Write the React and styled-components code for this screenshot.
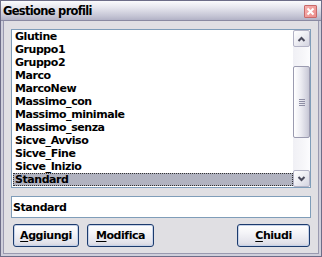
import React from "react";
import styled, { createGlobalStyle } from "styled-components";

const Global = createGlobalStyle`
  html, body { margin: 0; padding: 0; background: #e0dfe3; }
  * { box-sizing: border-box; }
`;

const FONT = `"DejaVu Sans", Verdana, sans-serif`;

const Window = styled.div`
  width: 322px;
  height: 257px;
  border: 1px solid #6d6d88;
  display: flex;
  flex-direction: column;
  background: #e0dfe3;
  box-shadow: inset 0 0 0 2px #cfcfdb, inset 0 0 0 3px #9a9ab0;
  font-family: ${FONT};
`;

const TitleBar = styled.div`
  height: 20px;
  flex: none;
  display: flex;
  align-items: center;
  justify-content: space-between;
  padding: 0 4px 0 2px;
  background: linear-gradient(to bottom, #fbfbfd 0%, #e6e6ee 35%, #c4c4d4 80%, #b2b2c6 100%);
  border-bottom: 1px solid #8a8aa2;
`;

const Title = styled.span`
  font-weight: bold;
  font-size: 11.5px;
  letter-spacing: -0.7px;
  color: #000;
  margin-top: 1px;
`;

const CloseBtn = styled.div`
  width: 13px;
  height: 13px;
  margin-top: 2px;
  border: 1px solid #c86a6a;
  border-radius: 1px;
  background: linear-gradient(135deg, #f6b0ae 0%, #ec8e8c 100%);
  display: flex;
  align-items: center;
  justify-content: center;
`;

const Body = styled.div`
  flex: 1;
  margin: 0 3px 3px;
  padding: 8px 7px 6px;
  display: flex;
  flex-direction: column;
`;

const ListBox = styled.div`
  height: 159px;
  flex: none;
  border: 1px solid #7f9db9;
  background: #fff;
  display: flex;
`;

const Items = styled.div`
  flex: 1;
  display: flex;
  flex-direction: column;
`;

const Item = styled.div`
  height: 13px;
  line-height: 14px;
  margin-left: 1px;
  padding-left: 2px;
  font-size: 11px;
  font-weight: bold;
  letter-spacing: -0.45px;
  color: #000;
  white-space: nowrap;
  outline: ${(p) => (p.$selected ? "1px dotted #333" : "none")};
  outline-offset: -1px;
  background: ${(p) => (p.$selected ? "#b1b3c0" : "transparent")};
`;

const ScrollBar = styled.div`
  width: 17px;
  flex: none;
  display: flex;
  flex-direction: column;
  background: linear-gradient(to right, #f0f0f5 0%, #f6f6f9 60%, #fcfcfe 100%);
`;

const ScrollBtn = styled.div`
  width: 17px;
  height: 17px;
  flex: none;
  border: 1px solid #b3b3c6;
  border-radius: 2px;
  background: linear-gradient(135deg, #ffffff 0%, #ececf2 50%, #d4d4e0 100%);
  display: flex;
  align-items: center;
  justify-content: center;
`;

const Track = styled.div`
  flex: 1;
  display: flex;
  flex-direction: column;
  padding-top: ${(p) => p.$before}px;
  padding-bottom: ${(p) => p.$after}px;
`;

const Thumb = styled.div`
  flex: 1;
  border: 1px solid #9b9bb0;
  border-radius: 2px;
  background: linear-gradient(to right, #ffffff 0%, #ececf2 45%, #d2d2de 85%, #c6c6d4 100%);
  display: flex;
  align-items: center;
  justify-content: center;
`;

const Grip = styled.div`
  width: 6px;
  display: flex;
  flex-direction: column;
  gap: 1px;
`;

const GripLine = styled.div`
  height: 1px;
  background: #8e8ea4;
`;

const TextBox = styled.div`
  margin-top: 8px;
  height: 22px;
  flex: none;
  border: 1px solid #7f9db9;
  background: #fff;
  padding-left: 1px;
  font-size: 11px;
  font-weight: bold;
  letter-spacing: -0.45px;
  display: flex;
  align-items: center;
`;

const ButtonRow = styled.div`
  margin-top: 6px;
  padding: 0 1px 0 2px;
  display: flex;
  gap: 8px;
`;

const Spacer = styled.div`
  flex: 1;
`;

const Button = styled.button`
  width: ${(p) => p.$w}px;
  height: 23px;
  border: 1px solid #1c3b6e;
  border-radius: 3px;
  background: linear-gradient(to bottom, #ffffff 0%, #f3f3f7 40%, #e2e2ea 85%, #d2d2de 100%);
  box-shadow: inset 0 0 0 1px #c6d2e8;
  font-family: ${FONT};
  font-size: 11px;
  font-weight: bold;
  letter-spacing: -0.45px;
  color: #000;
  padding: 0;
  display: flex;
  align-items: center;
  justify-content: center;
`;

const U = styled.span`
  text-decoration: underline;
  text-underline-offset: 2px;
`;

const names = [
  "Glutine",
  "Gruppo1",
  "Gruppo2",
  "Marco",
  "MarcoNew",
  "Massimo_con",
  "Massimo_minimale",
  "Massimo_senza",
  "Sicve_Avviso",
  "Sicve_Fine",
  "Sicve_Inizio",
  "Standard",
];

const Chevron = ({ up }) => (
  <svg width="9" height="6" viewBox="0 0 9 6">
    <path
      d={up ? "M1.5 5 L4.5 2 L7.5 5" : "M1.5 1 L4.5 4 L7.5 1"}
      fill="none"
      stroke="#4a4a5c"
      strokeWidth="2"
    />
  </svg>
);

export default function App() {
  return (
    <>
      <Global />
      <Window>
        <TitleBar>
          <Title>Gestione profili</Title>
          <CloseBtn>
            <svg width="9" height="9" viewBox="0 0 9 9">
              <path d="M1.5 1.5 L7.5 7.5 M7.5 1.5 L1.5 7.5" stroke="#fff" strokeWidth="2" />
            </svg>
          </CloseBtn>
        </TitleBar>
        <Body>
          <ListBox>
            <Items>
              {names.map((n) => (
                <Item key={n} $selected={n === "Standard"}>
                  {n}
                </Item>
              ))}
            </Items>
            <ScrollBar>
              <ScrollBtn>
                <Chevron up />
              </ScrollBtn>
              <Track $before={19} $after={32}>
                <Thumb>
                  <Grip>
                    <GripLine />
                    <GripLine />
                    <GripLine />
                    <GripLine />
                  </Grip>
                </Thumb>
              </Track>
              <ScrollBtn>
                <Chevron />
              </ScrollBtn>
            </ScrollBar>
          </ListBox>
          <TextBox>Standard</TextBox>
          <ButtonRow>
            <Button $w={66}>
              <U>A</U>ggiungi
            </Button>
            <Button $w={67}>
              <U>M</U>odifica
            </Button>
            <Spacer />
            <Button $w={73}>
              <U>C</U>hiudi
            </Button>
          </ButtonRow>
        </Body>
      </Window>
    </>
  );
}
